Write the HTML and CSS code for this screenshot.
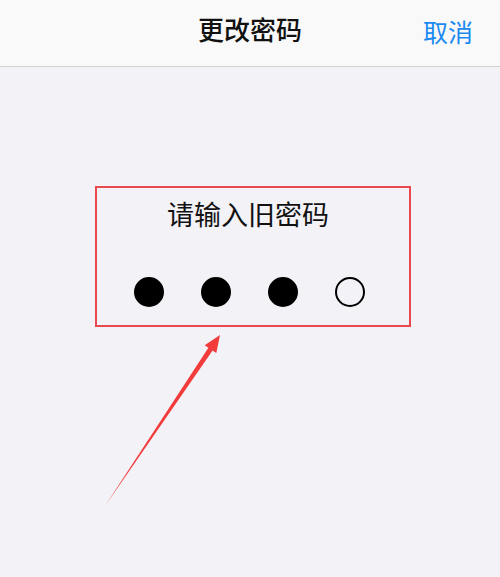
FILE: index.html
```html
<!DOCTYPE html>
<html lang="zh">
<head>
<meta charset="utf-8">
<link rel="stylesheet" href="styles.css">
</head>
<body>
<header class="nav">
  <div class="nav-title">更改密码</div>
  <div class="nav-cancel">取消</div>
</header>
<main class="content">
  <section class="pin-box">
    <div class="pin-label">请输入旧密码</div>
    <div class="pin-dots">
      <span class="dot filled"></span>
      <span class="dot filled"></span>
      <span class="dot filled"></span>
      <span class="dot"></span>
    </div>
  </section>
  <svg class="arrow" width="500" height="577" viewBox="0 0 500 577">
    <polygon points="105,506 208.4,347.7 204.7,345.2 220,335 216.3,353 212.6,350.5" fill="#f23b3b"/>
  </svg>
</main>
</body>
</html>
```
FILE: styles.css
```css
html, body {
  margin: 0;
  padding: 0;
}
body {
  width: 500px;
  height: 577px;
  background: #f2f2f7;
  font-family: "Noto Sans CJK SC", "Noto Sans", sans-serif;
  position: relative;
  overflow: hidden;
}
.nav {
  height: 67px;
  box-sizing: border-box;
  padding-bottom: 9px;
  background: #f9f9f9;
  border-bottom: 1px solid #d2d2d4;
  position: relative;
  display: flex;
  align-items: center;
  justify-content: center;
}
.nav-title {
  font-size: 26px;
  line-height: 36px;
  color: #111;
  font-weight: 500;
}
.nav-cancel {
  position: absolute;
  right: 27px;
  top: 13px;
  line-height: 36px;
  font-size: 25px;
  color: #1b8af0;
}
.content {
  padding-top: 119px;
}
.pin-box {
  margin-left: 95px;
  width: 312px;
  height: 137px;
  border: 2px solid #ea4a4e;
  display: flex;
  flex-direction: column;
  align-items: center;
}
.pin-label {
  font-size: 27px;
  color: #111;
  line-height: 36px;
  margin-top: 8px;
  margin-right: 10px;
}
.pin-dots {
  display: flex;
  gap: 37px;
  margin-top: 45px;
  margin-right: 7px;
}
.dot {
  width: 26px;
  height: 26px;
  border: 2px solid #000;
  border-radius: 50%;
  box-sizing: content-box;
}
.dot.filled {
  background: #000;
}
.arrow {
  position: absolute;
  left: 0;
  top: 0;
  pointer-events: none;
}
```
